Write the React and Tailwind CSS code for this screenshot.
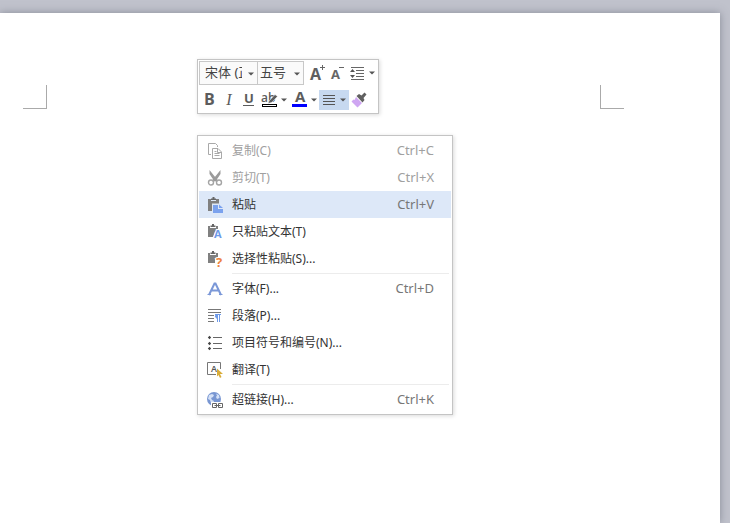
import React from "react";

const letterFont = "'Open Sans', 'Noto Sans', sans-serif";

const CopyIcon = () => (
  <svg width="16" height="16" viewBox="0 0 16 16" fill="none" stroke="#a9a9a9">
    <path d="M4 11.5H1.5V0.5H8.5L10.5 2.5V4" />
    <path d="M5.500 5.500H11L14.500 9V15.500H5.500Z" fill="#fff" />
    <path d="M10.500 5.500V9.500H14.500" />
    <path d="M7.500 8.500H9.500M7.500 10.500H12.500M7.500 12.500H12.500" />
  </svg>
);

const CutIcon = () => (
  <svg width="16" height="16" viewBox="0 0 16 16" fill="none" stroke="#a5a5a5">
    <path d="M2.500 0L8.500 7.500L11.500 11L8.500 11.500L5.500 8.500L2.500 4Z" fill="#9b9b9b" stroke="none" />
    <path d="M13.500 0L7.500 7.500L4.500 11L7.500 11.500L10.500 8.500L13.500 4Z" fill="#9b9b9b" stroke="none" />
    <circle cx="4" cy="12.500" r="2.500" strokeWidth="1.400" />
    <circle cx="12" cy="12.500" r="2.500" strokeWidth="1.400" />
  </svg>
);

const PasteIcon = () => (
  <svg width="16" height="16" viewBox="0 0 16 16">
    <path d="M1 2H4V4H9V2H12V14H1Z" fill="#808080" />
    <path d="M4 3V1.500H5.500V0H7.500V1.500H9V3Z" fill="#666" />
    <path d="M5 6.500H12L16 10V16H5Z" fill="#dde8f8" />
    <path d="M6 8H11V12H16V16H6Z" fill="#7ba2ee" />
    <path d="M12 7.500L16 11H12Z" fill="#7ba2ee" />
  </svg>
);

const PasteTextIcon = () => (
  <svg width="16" height="16" viewBox="0 0 16 16" overflow="visible">
    <path d="M1 2H3V4H9V2H11V6L8 8L6 13H1Z" fill="#808080" />
    <path d="M3.500 3V1.500H5V0H7V1.500H8.500V3Z" fill="#666" />
    <text x="7" y="14" fontSize="11" fontWeight="700" fontFamily={letterFont} fill="#6f9ae8" stroke="#fff" strokeWidth="2" paintOrder="stroke">A</text>
  </svg>
);

const PasteSpecialIcon = () => (
  <svg width="16" height="16" viewBox="0 0 16 16" overflow="visible">
    <path d="M1 2H3V4H9V2H11V6L8 7V12H1Z" fill="#808080" />
    <path d="M3.500 3V1.500H5V0H7V1.500H8.500V3Z" fill="#666" />
    <text x="9" y="16" fontSize="13" fontWeight="700" fontFamily={letterFont} fill="#ee8340" stroke="#fff" strokeWidth="2" paintOrder="stroke">?</text>
  </svg>
);

const FontIcon = () => (
  <svg width="16" height="16" viewBox="0 0 16 16" fill="none" stroke="#7b98d8" strokeWidth="2">
    <path d="M2 14L7.500 2.500H8.500L14 14M4 9.500H12" />
    <path d="M0.500 13.500H4M12 13.500H15.500" strokeWidth="1" />
  </svg>
);

const ParagraphIcon = () => (
  <svg width="16" height="16" viewBox="0 0 16 16" fill="none" stroke="#777">
    <path d="M1 1.500H14M1 4.500H14M1 7.500H7M1 10.500H7M1 13.500H7" />
    <path d="M10.500 6V14M12.500 6V14M8 6.500H14" stroke="#6f9ae8" />
    <path d="M10.500 6.500H9.500A2 2 0 0 0 9.500 10H10.500Z" fill="#6f9ae8" stroke="#6f9ae8" />
  </svg>
);

const BulletsIcon = () => (
  <svg width="16" height="16" viewBox="0 0 16 16" stroke="#666" fill="#444">
    <path d="M6 2.500H15M6 8.500H15M6 13.500H15" />
    <path d="M2.500 0.800L4.200 2.500L2.500 4.200L0.800 2.500ZM2.500 6.800L4.200 8.500L2.500 10.200L0.800 8.500ZM2.500 11.800L4.200 13.500L2.500 15.200L0.800 13.500Z" stroke="none" />
  </svg>
);

const TranslateIcon = () => (
  <svg width="16" height="16" viewBox="0 0 16 16">
    <path d="M9 12.500H0.500V0.500H13.500V7" fill="none" stroke="#777" />
    <text x="4" y="10" fontSize="9" fontWeight="600" fontFamily={letterFont} fill="#555">A</text>
    <path d="M10 6.500L16 12H13L14.500 15L13 16L11.500 13L10 14.500Z" fill="#d9ac38" />
  </svg>
);

const LinkIcon = () => (
  <svg width="16" height="16" viewBox="0 0 16 16">
    <circle cx="7" cy="7" r="7" fill="#7896d2" />
    <path d="M2 3L5 2L7 3L6 5L4 6L5 8L7 9L6 12L4 11L3 8L1 7ZM9 1.500L12 3L12.500 6L10 7L9 5L10 3.500Z" fill="#d5e1f6" />
    <rect x="4" y="10" width="12" height="6" fill="#fff" />
    <path d="M9.500 11.500H5.500V15.500H9.500ZM15.500 11.500H11.500V15.500H15.500ZM7.500 13.500H13.500" fill="none" stroke="#666" />
  </svg>
);

const Arrow = () => (
  <svg className="shrink-0" width="6" height="4" viewBox="0 0 6 4">
    <path d="M0 0.500H6L3 3.500Z" fill="#555" />
  </svg>
);

const menuGroups = [
  [
    { label: "复制(C)", shortcut: "Ctrl+C", icon: CopyIcon, disabled: true },
    { label: "剪切(T)", shortcut: "Ctrl+X", icon: CutIcon, disabled: true },
    { label: "粘贴", shortcut: "Ctrl+V", icon: PasteIcon, active: true },
    { label: "只粘贴文本(T)", icon: PasteTextIcon },
    { label: "选择性粘贴(S)...", icon: PasteSpecialIcon },
  ],
  [
    { label: "字体(F)...", shortcut: "Ctrl+D", icon: FontIcon },
    { label: "段落(P)...", icon: ParagraphIcon },
    { label: "项目符号和编号(N)...", icon: BulletsIcon },
    { label: "翻译(T)", icon: TranslateIcon },
  ],
  [{ label: "超链接(H)...", shortcut: "Ctrl+K", icon: LinkIcon }],
];

const MenuItem = ({ label, shortcut, icon: Icon, disabled, active }) => (
  <button
    type="button"
    role="menuitem"
    disabled={disabled}
    className={`flex h-[27px] w-full items-center pr-[17px] pl-2 text-left ${
      active ? "bg-[#dde8f8]" : "bg-white"
    } ${disabled ? "text-[#a0a0a0]" : "text-[#333]"}`}
  >
    <Icon />
    <span className="ml-[9px] flex-1 text-[12px]">{label}</span>
    {shortcut && (
      <span className={`text-[13px] ${disabled ? "text-[#a0a0a0]" : "text-[#777]"}`}>{shortcut}</span>
    )}
  </button>
);

const ContextMenu = () => (
  <div role="menu" className="w-64 border border-[#c4c4c4] bg-white p-px shadow-[1px_1px_4px_rgba(0,0,0,0.15)]">
    {menuGroups.map((group, i) => (
      <React.Fragment key={i}>
        {i > 0 && <hr className="my-px mr-[2px] ml-[33px] border-[#ececec]" />}
        {group.map((item) => (
          <MenuItem key={item.label} {...item} />
        ))}
      </React.Fragment>
    ))}
  </div>
);

const ToolButton = ({ title, className, children }) => (
  <button type="button" title={title} aria-label={title} className={`flex h-5 items-center justify-center ${className}`}>
    {children}
  </button>
);

const ToolSelect = ({ label, className, options }) => (
  <div className="relative flex">
    <select
      aria-label={label}
      className={`h-6 appearance-none border border-[#c8c8c8] bg-[#fafafa] text-[13px] text-[#444] ${className}`}
    >
      {options.map((option) => (
        <option key={option}>{option}</option>
      ))}
    </select>
    <span className="pointer-events-none absolute inset-y-0 right-1 flex items-center pt-px">
      <Arrow />
    </span>
  </div>
);

const MiniToolbar = () => (
  <div role="toolbar" className="flex flex-col gap-[5px] self-start border border-[#c4c4c4] bg-white p-px pb-[3px] shadow-[1px_1px_4px_rgba(0,0,0,0.15)]">
    <div className="flex items-center">
      <ToolSelect label="字体" className="w-[59px] pr-[15px] pl-[5px]" options={["宋体 (正文)", "黑体"]} />
      <ToolSelect label="字号" className="-ml-px w-[47px] pr-4 pl-[2px]" options={["五号", "四号"]} />
      <ToolButton title="增大字号" className="ml-[2px] w-[21px]">
        <svg width="16" height="16" viewBox="0 0 16 16" overflow="visible">
          <text x="1" y="15" fontSize="16" fontWeight="700" fontFamily={letterFont} fill="#606060">A</text>
          <path d="M11 2.500H16M13.500 0V5" stroke="#666" />
        </svg>
      </ToolButton>
      <ToolButton title="减小字号" className="w-5">
        <svg width="16" height="16" viewBox="0 0 16 16" overflow="visible">
          <text x="2" y="14" fontSize="13" fontWeight="700" fontFamily={letterFont} fill="#666">A</text>
          <path d="M10 2.500H15" stroke="#666" />
        </svg>
      </ToolButton>
      <ToolButton title="行距" className="w-[30px] gap-1">
        <svg width="15" height="16" viewBox="0 0 15 16">
          <path d="M1 2.500H14M6 5.500H14M6 8.500H14M6 11.500H14M1 14.500H14" stroke="#666" />
          <path d="M0 7H5L2.500 4ZM0 10H5L2.500 13Z" fill="#555" />
        </svg>
        <Arrow />
      </ToolButton>
    </div>
    <div className="flex items-center font-['Open_Sans','Noto_Sans',sans-serif] text-[#5c5c5c]">
      <ToolButton title="加粗" className="w-5">
        <svg width="12" height="14" viewBox="0 0 12 14" overflow="visible">
          <text x="1" y="12" fontSize="16" fontWeight="700" fontFamily={letterFont} fill="#5c5c5c">B</text>
        </svg>
      </ToolButton>
      <ToolButton title="倾斜" className="w-5 font-['Liberation_Serif',serif] text-[16px] italic">I</ToolButton>
      <ToolButton title="下划线" className="w-5">
        <svg width="12" height="14" viewBox="0 0 12 14" overflow="visible">
          <text x="1" y="10" fontSize="13" fontWeight="700" fontFamily={letterFont} fill="#5c5c5c">U</text>
          <path d="M0 12.500H11" stroke="#5c5c5c" />
        </svg>
      </ToolButton>
      <ToolButton title="突出显示" className="w-[30px] gap-[3px]">
        <svg width="17" height="16" viewBox="0 0 17 16" overflow="visible">
          <text x="0" y="10" fontSize="12" fontWeight="600" fontFamily={letterFont} fill="#5c5c5c">ab</text>
          <path d="M8 9L14 2.500L16.500 4.500L10.500 10.500L7 11.500Z" fill="#5c5c5c" stroke="#fff" strokeWidth="0.500" />
          <rect x="1.500" y="12.500" width="14" height="2" fill="#fff" stroke="#000" />
        </svg>
        <Arrow />
      </ToolButton>
      <ToolButton title="字体颜色" className="w-[30px] gap-[3px]">
        <svg width="16" height="16" viewBox="0 0 16 16" overflow="visible">
          <text x="3" y="10" fontSize="15" fontWeight="700" fontFamily={letterFont} fill="#5c5c5c">A</text>
          <rect x="0" y="12" width="15" height="3" fill="#0000ff" />
        </svg>
        <Arrow />
      </ToolButton>
      <ToolButton title="对齐方式" className="w-[30px] gap-[5px] bg-[#c7d9f0]">
        <svg width="12" height="12" viewBox="0 0 12 12">
          <path d="M0 1.500H12M0 4.500H12M0 7.500H12M0 10.500H12" stroke="#555" />
        </svg>
        <Arrow />
      </ToolButton>
      <ToolButton title="格式刷" className="w-5">
        <svg width="16" height="16" viewBox="0 0 16 16">
          <path d="M5 5L11 11L6.500 15.500L0.500 9.500L2.500 7.500L3.500 8Z" fill="#cfa6f2" />
          <path d="M5.500 4L8 2L10.500 3.500L13.500 0.500L15.500 2.500L12.500 6L13.500 8L11.500 10.500Z" fill="#606060" />
        </svg>
      </ToolButton>
    </div>
  </div>
);

const App = () => {
  return (
    <div className="flex min-h-screen overflow-hidden bg-[#c0c2cc] pt-[13px] pr-[10px] font-['Noto_Sans','Noto_Sans_CJK_SC',sans-serif]">
      <main className="flex flex-1 items-start justify-between bg-white pt-[72px] pr-24 pl-[23px] shadow-[0_0_8px_rgba(80,85,100,0.5)]">
        {/* margin corners of the document page */}
        <div className="size-6 border-r border-b border-[#aaa]" />
        <div className="size-6 border-b border-l border-[#aaa]" />
      </main>
      <div className="absolute top-[59px] left-[197px] flex flex-col gap-[21px]">
        <MiniToolbar />
        <ContextMenu />
      </div>
    </div>
  );
};

export default App;
